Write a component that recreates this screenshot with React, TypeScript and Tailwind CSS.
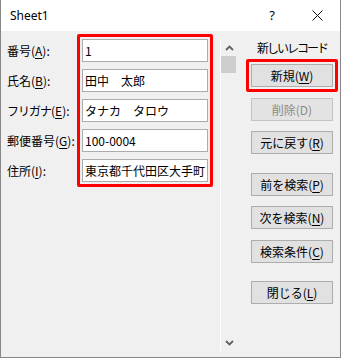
import React from "react";

const U = ({ c }: { c: string }) => (
  <span className="underline underline-offset-[2px] decoration-[1px]">{c}</span>
);

const rows: { label: React.ReactNode; value: string }[] = [
  { label: <>番号(<U c="A" />):</>, value: "1" },
  { label: <>氏名(<U c="B" />):</>, value: "田中　太郎" },
  { label: <><span className="tracking-[-1px]">フリガナ</span>(<U c="E" />):</>, value: "タナカ　タロウ" },
  { label: <>郵便番号(<U c="G" />):</>, value: "100-0004" },
  { label: <>住所(<U c="I" />):</>, value: "東京都千代田区大手町" },
];

const Btn = ({
  children,
  disabled,
  className = "",
}: {
  children: React.ReactNode;
  disabled?: boolean;
  className?: string;
}) => (
  <div
    className={
      "w-[82px] h-[23px] flex items-center justify-center border whitespace-nowrap leading-none " +
      (disabled
        ? "bg-[#e3e3e3] border-[#c4c4c4] text-[#8a8a8a] "
        : "bg-[#e1e1e1] border-[#adadad] text-black ") +
      className
    }
  >
    {children}
  </div>
);

const Chevron = ({ up }: { up?: boolean }) => (
  <svg width="9" height="6" viewBox="0 0 9 6">
    <path
      d={up ? "M1 5 L4.5 1.5 L8 5" : "M1 1 L4.5 4.5 L8 1"}
      fill="none"
      stroke="#606060"
      strokeWidth="1.8"
    />
  </svg>
);

export default function App() {
  return (
    <div className="w-[341px] h-[358px] flex flex-col border-l border-r border-b border-[#888888] bg-white text-[12px] text-black font-['Noto_Sans_CJK_JP','Noto_Sans',sans-serif]">
      <div className="h-[31px] flex items-center bg-white shrink-0">
        <span className="ml-[9px] text-[12px] font-['Noto_Sans','Noto_Sans_CJK_JP',sans-serif]">
          Sheet1
        </span>
        <div className="ml-auto w-[46px] h-full flex items-center justify-center text-[13px] font-['Noto_Sans',sans-serif]">
          ?
        </div>
        <div className="w-[45px] h-full flex items-center justify-center">
          <svg width="11" height="11" viewBox="0 0 11 11">
            <path d="M0.5 0.5 L10.5 10.5 M10.5 0.5 L0.5 10.5" stroke="#111" strokeWidth="1" />
          </svg>
        </div>
      </div>

      <div className="flex-1 bg-[#f0f0f0] flex">
        {/* fields */}
        <div className="w-[219px] flex items-start">
          <div className="w-[76px] pl-[6px] mt-[8px] flex flex-col gap-[7px]">
            {rows.map((r, i) => (
              <div key={i} className="h-[23px] flex items-center whitespace-nowrap">
                {r.label}
              </div>
            ))}
          </div>
          <div className="mt-[3px] w-[136px] border-[3px] border-[#ff0000] rounded-[2px] p-[2px] flex flex-col gap-[7px]">
            {rows.map((r, i) => (
              <div
                key={i}
                className="h-[23px] bg-white border border-[#acacac] flex items-center px-[2px] whitespace-nowrap overflow-hidden"
              >
                {r.value}
              </div>
            ))}
          </div>
        </div>

        {/* scrollbar */}
        <div className="w-[17px] mt-[9px] h-[311px] border-l border-white flex flex-col">
          <div className="h-[16px] flex items-center justify-center">
            <Chevron up />
          </div>
          <div className="w-[15px] h-[17px] bg-[#cdcdcd]" />
          <div className="flex-1" />
          <div className="h-[17px] flex items-center justify-center">
            <Chevron />
          </div>
        </div>

        {/* buttons */}
        <div className="flex-1 pl-[14px] pt-[9px] flex flex-col">
          <div className="w-[82px] h-[16px] leading-[16px] text-center whitespace-nowrap tracking-[-2px]">
            新しいレコード
          </div>
          <div className="mt-[3px] -ml-[5px] w-[92px] border-[3px] border-[#ff0000] rounded-[2px] p-[2px]">
            <Btn>
              新規(<U c="W" />)
            </Btn>
          </div>
          <Btn disabled className="mt-[6px]">
            削除(D)
          </Btn>
          <Btn className="mt-[10px]">
            元に戻す(<U c="R" />)
          </Btn>
          <Btn className="mt-[19px]">
            前を検索(<U c="P" />)
          </Btn>
          <Btn className="mt-[10px]">
            次を検索(<U c="N" />)
          </Btn>
          <Btn className="mt-[11px]">
            検索条件(<U c="C" />)
          </Btn>
          <Btn className="mt-[18px]">
            閉じる(<U c="L" />)
          </Btn>
        </div>
      </div>
    </div>
  );
}
